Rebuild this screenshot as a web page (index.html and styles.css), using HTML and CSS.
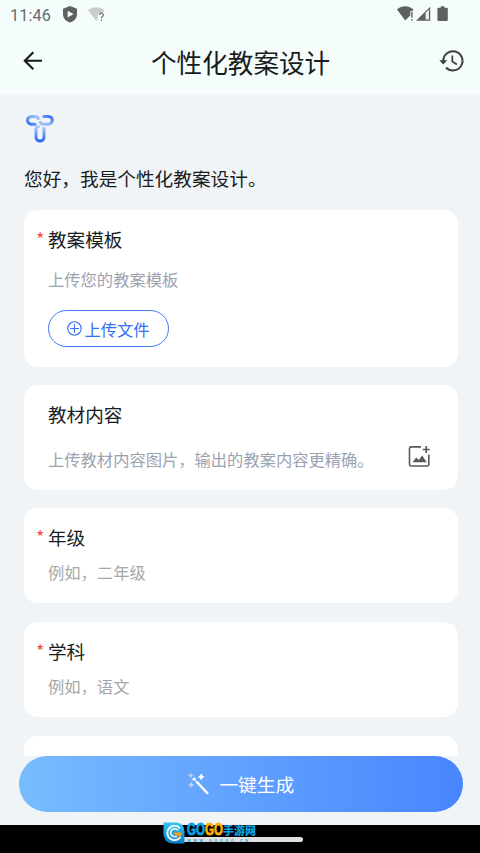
FILE: index.html
```html
<!DOCTYPE html>
<html lang="zh-CN">
<head>
<meta charset="utf-8">
<title>个性化教案设计</title>
<link rel="stylesheet" href="styles.css">
</head>
<body>
<div class="phone">
  <div class="top">
    <div class="status">
      <span class="time">11:46</span>
      <svg class="shield" width="14" height="17" viewBox="0 0 14 17"><path d="M7 0 14 2.800V8c0 4-3 7.500-7 8.600C3 15.500 0 12 0 8V2.800z" fill="#5d6162"/><path d="M4.700 4.800v6.600L10.600 8.100z" fill="#f5fcfc"/></svg>
      <svg class="wifi-q" width="18" height="16" viewBox="0 0 18 16"><path d="M0 3.200C4.500-.8 12-.8 16.500 3.200L14.300 6 10 6.500 9.500 12.300 8.200 13.800z" fill="#c8cccd"/><path d="M11.500 8c.1-2.400 3.800-2.400 3.800-.1 0 1.600-1.900 1.600-1.900 3.400M13.400 12.600v1.400" fill="none" stroke="#6a6e70" stroke-width="1.200"/></svg>
      <span class="spacer"></span>
      <svg class="signals" width="52" height="16" viewBox="0 0 52 16"><path d="M0 3.500C4.700-.7 11.600-.7 16.300 3.500L15.500 5H13.300V9.500L8.200 14.500z" fill="#5d6162"/><path d="M14.900 5.800v6M14.900 13v1.600" stroke="#5d6162" stroke-width="1.400"/><path d="M19 14.800 33.200.8v14z" fill="#5d6162"/><path d="M28.600 6.800 31.900 3.600v9.900h-3.300z" fill="#eef3f3"/><path d="M43.700.3h3.700v1.400h2.200q1.200 0 1.200 1.200v10.800q0 1.200-1.200 1.200h-8q-1.200 0-1.200-1.200V2.900q0-1.200 1.200-1.200h2.100z" fill="#5d6162"/></svg>
    </div>
    <div class="appbar">
      <svg class="back" width="20" height="20" viewBox="0 0 20 20"><path d="M10.300 1.200 1.800 9.700l8.500 8.500M2 9.700h17" fill="none" stroke="#171b1c" stroke-width="2.100"/></svg>
      <h1>个性化教案设计</h1>
      <svg class="history" width="26" height="24" viewBox="0 0 26 24"><path d="M4.300 12A9.600 9.600 0 1 1 7 18.500" fill="none" stroke="#3d4142" stroke-width="2"/><path d="M.3 11.200h8L4.300 15.400z" fill="#3d4142"/><path d="M13.300 6.500v6l4.600 3" fill="none" stroke="#3d4142" stroke-width="1.700"/></svg>
    </div>
  </div>

  <main class="content">
    <svg class="logo" width="30" height="30" viewBox="0 0 30 30">
      <defs>
        <linearGradient id="left" x1="0" y1="1" x2="1" y2="0"><stop offset="0" stop-color="#2f6dfb"/><stop offset=".5" stop-color="#6f9ffc"/><stop offset="1" stop-color="#a9c8fd"/></linearGradient>
        <linearGradient id="right" x1="0" y1="1" x2="1" y2="0"><stop offset="0" stop-color="#a3c3fd"/><stop offset=".45" stop-color="#8bb2fb"/><stop offset="1" stop-color="#2866fa"/></linearGradient>
        <linearGradient id="stem" x1="0" y1="0" x2="0" y2="1"><stop offset="0" stop-color="#a9c8fd"/><stop offset="1" stop-color="#2e69f8"/></linearGradient>
      </defs>
      <g fill="none" stroke-width="3" stroke-linecap="round">
        <path d="M13.300 4.500Q12.700 2.400 10.800 2.400H6.400a3.900 3.900 0 0 0 0 7.800h3.700" stroke="url(#left)"/>
        <path d="M18.600 2.400h4.800a3.900 3.900 0 0 1 0 7.800H17.600Q15.800 10.200 15.200 8.400" stroke="url(#right)"/>
        <path d="M13.400 12.800Q11 12.800 11 15.200v7.800a4 4 0 0 0 8 0V14.300" stroke="url(#stem)"/>
      </g>
    </svg>
    <p class="greeting">您好，我是个性化教案设计。</p>

    <section class="card card-template">
      <h2 class="required">教案模板</h2>
      <p class="hint">上传您的教案模板</p>
      <button class="upload">
        <svg width="15" height="15" viewBox="0 0 15 15"><path d="M7.500 3.200v8.600M3.200 7.500h8.600" stroke="#356efa" stroke-width="1.100"/><circle cx="7.500" cy="7.500" r="6.700" fill="none" stroke="#356efa" stroke-width="1.100"/></svg>
        <span>上传文件</span>
      </button>
    </section>

    <section class="card card-material">
      <h2>教材内容</h2>
      <div class="row">
        <p class="hint">上传教材内容图片，输出的教案内容更精确。</p>
        <svg width="23" height="23" viewBox="0 0 23 23"><path d="M13 1.900H3Q1.500 1.900 1.500 3.400v16.200q0 1.400 1.500 1.400h16.300q1.500 0 1.500-1.400V9.500" fill="none" stroke="#55595b" stroke-width="1.600"/><path d="M18.200 1v7M14.700 4.500h7" stroke="#55595b" stroke-width="1.700"/><path d="M4.500 17.200 8.200 12.500l2.500 2.600 3.500-4.500 4.500 6.600z" fill="#55595b"/></svg>
      </div>
    </section>

    <section class="card card-field">
      <h2 class="required">年级</h2>
      <p class="hint plain">例如，二年级</p>
    </section>

    <section class="card card-field">
      <h2 class="required">学科</h2>
      <p class="hint plain">例如，语文</p>
    </section>

    <section class="card card-field"></section>
  </main>

  <footer class="action">
    <button class="generate">
      <svg width="22" height="22" viewBox="0 0 22 22"><path d="m8.800 9 10.500 11" stroke="#fff" stroke-width="2.500" stroke-linecap="round"/><circle cx="6.200" cy="6.200" r="1.700" fill="#fff"/><path d="M13.200.2Q14 3 16.800 3.800 14 4.600 13.200 7.400 12.400 4.600 9.600 3.800 12.400 3 13.200.2z" fill="#fff"/><path d="M2.800-.2Q3.400 2 5.600 2.600 3.400 3.200 2.800 5.400 2.200 3.200 0 2.600 2.200 2 2.800-.2zM3.200 8.800Q3.900 11.200 6.300 11.900 3.900 12.600 3.200 15 2.500 12.600.1 11.900 2.500 11.200 3.200 8.800z" fill="#bccff8"/></svg>
      <span>一键生成</span>
    </button>
  </footer>

  <div class="navbar">
    <div class="handle"></div>
    <div class="brand">
      <svg width="22" height="22" viewBox="0 0 22 22"><defs><linearGradient id="badge" x1="0" y1="0" x2="0" y2="1"><stop offset="0" stop-color="#36c4ee"/><stop offset="1" stop-color="#087fc8"/></linearGradient></defs><path d="M.5.500H13Q21.500 1 21.500 10v11.500H10Q.5 21 .5 11z" fill="url(#badge)"/><path d="M17 6.300A7.200 7.200 0 1 0 17.500 15" fill="none" stroke="#e9f8ff" stroke-width="2"/><path d="M15 8.500A4 4 0 1 0 14 14" fill="none" stroke="#e9f8ff" stroke-width="1.700"/><path d="M10.500 10.500H19Q18.500 14.500 15.500 16.500V13H12z" fill="#ff9d1c"/></svg>
      <div class="brand-text">
        <div class="brand-name"><b class="go">GO</b><b class="go amber">GO</b><b class="cn">手游网</b></div>
        <div class="brand-url">WWW.GOOGO.CN</div>
      </div>
    </div>
  </div>
</div>
</body>
</html>
```
FILE: styles.css
```css
* { box-sizing: border-box; }

body {
  margin: 0;
  background: #f0f4f7;
  color: #191c1d;
  font-family: "Noto Sans CJK SC", sans-serif;
}

h1, h2, p { margin: 0; font-weight: 400; }
svg { display: block; flex: none; overflow: visible; }
button { border: 0; font: inherit; }

.phone {
  display: flex;
  flex-direction: column;
  width: 480px;
  height: 853px;
  overflow: hidden;
}

.top { flex: none; height: 94px; background: #f5fcfc; }

.status {
  display: flex;
  align-items: flex-start;
  height: 30px;
  padding: 6px 32px 0 10px;
}
.time {
  width: 53px;
  font: 16.300px/19px Roboto, sans-serif;
  letter-spacing: .1px;
  color: #65696a;
}
.wifi-q { margin: 1px 0 0 11px; }
.spacer { flex: 1; }
.signals { margin-right: -1px; }

.appbar {
  display: flex;
  align-items: center;
  height: 62px;
  padding: 0 15px 0 23px;
}
.appbar h1 {
  flex: 1;
  padding: 2px 0 0 108px;
  font-size: 25.600px;
  line-height: 36px;
}

.content {
  flex: none;
  height: 662px;
  padding: 20px 22px 0 24px;
  overflow: hidden;
}
.logo { margin-left: 1px; }
.greeting {
  margin-top: 20px;
  font-size: 18.670px;
  line-height: 28px;
}

.card {
  margin-bottom: 18.700px;
  padding: 16px 26px 0 24px;
  background: #fff;
  border-radius: 14px;
}
.card h2 { position: relative; font-size: 18.600px; line-height: 26px; }
.required::before {
  content: "*";
  position: absolute;
  left: -12px;
  top: -1px;
  font-size: 18px;
  color: #ef4c42;
}
.hint { font-size: 16.300px; line-height: 24px; color: #9ca2b0; }
.hint.plain { margin-top: 10px; color: #a6a7a9; }

.card-template { height: 156.500px; margin-top: 18px; }
.card-template .hint { margin-top: 15px; }
.card-material { height: 104.500px; }
.card-field { height: 95px; }

.upload {
  display: flex;
  align-items: center;
  justify-content: center;
  gap: 2px;
  width: 121px;
  height: 37px;
  margin-top: 19px;
  padding: 0;
  border: 1px solid #3f78fa;
  border-radius: 19px;
  background: #fff;
  color: #356efa;
  font-size: 16.300px;
}

.row {
  display: flex;
  align-items: center;
  justify-content: space-between;
  margin-top: 19.500px;
}
.row .hint { white-space: nowrap; }
.row svg { margin: -5px 1px 0 0; }

.action { flex: none; height: 69px; padding: 0 17.500px 0 19px; }
.generate {
  display: flex;
  align-items: center;
  justify-content: center;
  gap: 9px;
  width: 100%;
  height: 56px;
  padding: 0 0 0 1px;
  border-radius: 28px;
  background: linear-gradient(90deg, #78bcff, #4885fe);
  color: #fff;
  font-size: 18.670px;
}
.generate span { margin-top: -1px; }

.navbar {
  position: relative;
  flex: none;
  height: 28px;
  padding-top: 12px;
  background: #000;
}
.handle {
  width: 126px;
  height: 5px;
  margin: 0 auto;
  border-radius: 3px;
  background: #e0e0e0;
}
.brand {
  position: absolute;
  left: 163px;
  top: -3px;
  display: flex;
  gap: 2px;
}
.brand-name {
  display: flex;
  align-items: center;
  height: 16px;
}
.go {
  width: 18px;
  font: bold 17px/16px "Liberation Sans", sans-serif;
  transform: scaleX(.68);
  transform-origin: left;
  color: #0aa2e8;
  -webkit-text-stroke: .8px currentColor;
}
.go.amber { color: #ffae0b; }
.cn { font-size: 11px; line-height: 16px; font-weight: 900; color: #0aa2e8; }
.brand-url {
  margin-top: 1px;
  font: bold 4px/4px "Liberation Sans", sans-serif;
  letter-spacing: 2.400px;
  color: #2a9fd0;
  white-space: nowrap;
}
```
